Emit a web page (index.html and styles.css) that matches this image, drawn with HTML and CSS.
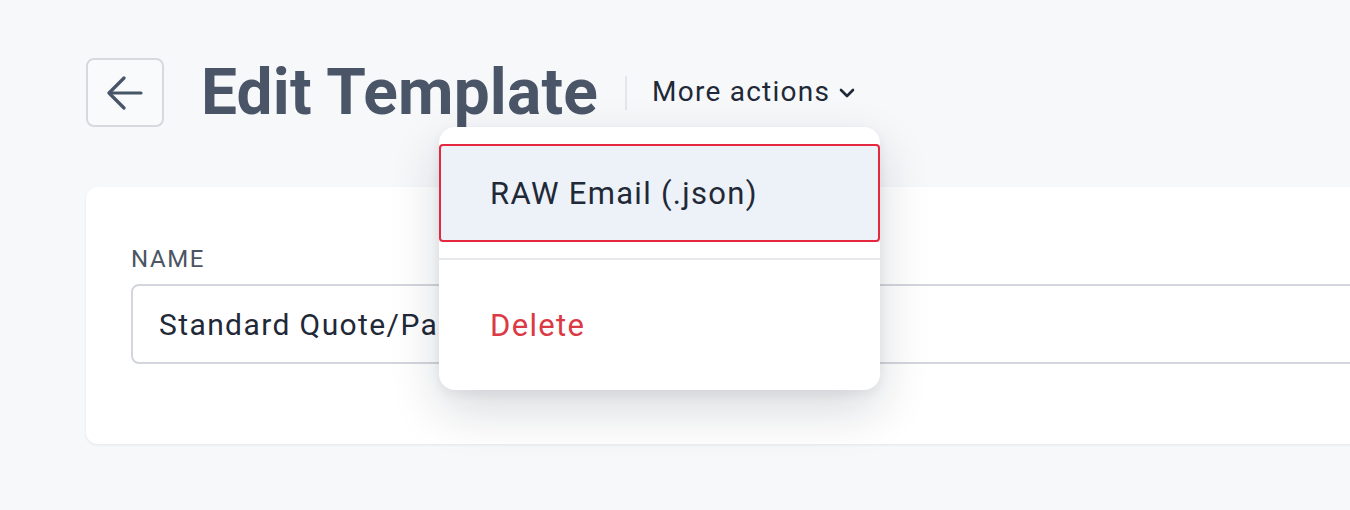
FILE: index.html
```html
<!DOCTYPE html>
<html>
<head>
<meta charset="utf-8">
<link rel="stylesheet" href="styles.css">
</head>
<body>
<div class="page">
  <header class="header">
    <button class="back-btn" aria-label="Back">
      <svg width="36" height="34" viewBox="0 0 36 34" fill="none" stroke="#475569" stroke-width="3.2" stroke-linecap="round" stroke-linejoin="round">
        <path d="M34 17H3"/>
        <path d="M17 2L2 17l15 15"/>
      </svg>
    </button>
    <h1 class="title">Edit Template</h1>
    <span class="sep"></span>
    <div class="more">
      <span class="more-label">More actions</span>
      <svg class="chev" width="16" height="10" viewBox="0 0 16 10" fill="none" stroke="#1f2937" stroke-width="2.6" stroke-linecap="round" stroke-linejoin="round">
        <path d="M2 2l6 6 6-6"/>
      </svg>
      <div class="menu">
        <div class="menu-group">
          <div class="menu-item active">RAW Email (.json)</div>
        </div>
        <div class="menu-divider"></div>
        <div class="menu-group">
          <div class="menu-item danger">Delete</div>
        </div>
      </div>
    </div>
  </header>
  <section class="card">
    <label class="field-label">NAME</label>
    <div class="input">Standard Quote/Parts Request</div>
  </section>
</div>
</body>
</html>
```

FILE: styles.css
```css
html, body {
  margin: 0;
  padding: 0;
}
body {
  background: #f7f8fa;
  font-family: Roboto, "Noto Sans", sans-serif;
  color: #1f2937;
  width: 1350px;
  height: 510px;
  overflow: hidden;
}
.page {
  padding: 58px 0 0 86px;
}
.header {
  display: flex;
  align-items: center;
  height: 69px;
}
.back-btn {
  box-sizing: border-box;
  width: 78px;
  height: 69px;
  border: 2px solid #d6d9de;
  border-radius: 8px;
  background: #f9fafb;
  display: flex;
  align-items: center;
  justify-content: center;
  padding: 0;
  margin: 0 37px 0 0;
}
.title {
  margin: 0;
  font-size: 64px;
  font-weight: 700;
  color: #4a5568;
  line-height: 1;
  letter-spacing: 0.2px;
}
.sep {
  width: 2px;
  height: 34px;
  background: #e3e6ea;
  margin: 0 25px 0 27px;
}
.more {
  position: relative;
  display: flex;
  align-items: center;
  gap: 9px;
  font-size: 28px;
  letter-spacing: 1.25px;
  color: #1f2937;
  margin-top: -2px;
}
.chev {
  margin-top: 2px;
}
.menu {
  position: absolute;
  left: -213px;
  top: 52px;
  width: 441px;
  background: #fff;
  border-radius: 16px;
  box-shadow: 0 20px 50px rgba(15, 23, 42, 0.16), 0 4px 12px rgba(15, 23, 42, 0.06);
  z-index: 10;
}
.menu-group {
  padding: 16px 0;
}
.menu-group:first-child {
  padding-top: 17px;
}
.menu-item {
  box-sizing: border-box;
  height: 98px;
  display: flex;
  align-items: center;
  padding-left: 51px;
  font-size: 31px;
  letter-spacing: 1.3px;
  color: #1f2937;
}
.menu-item.active {
  background: #edf1f8;
  border: 2px solid #e5273f;
  border-radius: 4px;
  padding-left: 49px;
}
.menu-item.danger {
  color: #db3a45;
}
.menu-divider {
  height: 2px;
  background: #e7e9ed;
}
.card {
  margin-top: 60px;
  width: 1320px;
  box-sizing: border-box;
  height: 257px;
  background: #fff;
  border-radius: 12px;
  box-shadow: 0 1px 3px rgba(15, 23, 42, 0.08);
  padding: 59px 0 0 45px;
}
.field-label {
  display: block;
  font-size: 24px;
  letter-spacing: 1.6px;
  color: #4b5563;
  line-height: 26px;
  margin-bottom: 12px;
}
.input {
  box-sizing: border-box;
  height: 80px;
  border: 2px solid #d3d6dc;
  border-radius: 8px;
  display: flex;
  align-items: center;
  padding-left: 26px;
  font-size: 30px;
  letter-spacing: 1.4px;
  color: #1f2937;
  white-space: nowrap;
}
```
